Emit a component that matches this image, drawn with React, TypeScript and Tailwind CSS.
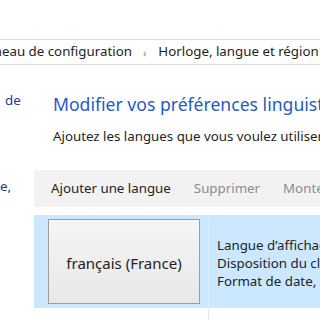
import React from "react";

export default function App() {
  return (
    <div className="w-[320px] h-[320px] overflow-hidden bg-white flex flex-col font-['Segoe_UI','Noto_Sans',sans-serif] text-[13.3px] text-[#1e1e1e]">
      <div className="h-[39px] shrink-0" />
      <div className="h-[26px] shrink-0 border-y border-[#dcdcdc] flex items-center whitespace-nowrap leading-none">
        <span className="ml-[-30px]">Panneau de configuration</span>
        <span className="ml-[11px] mr-[12px] text-[#8a8a8a] text-[11px]">›</span>
        <span>Horloge, langue et région</span>
      </div>
      <div className="flex flex-1 min-h-0">
        <div className="w-[34px] shrink-0 relative text-[#1c3b8f] whitespace-nowrap">
          <div className="pl-[5px] pt-[26px] leading-[18px]">de</div>
          <div className="pt-[68px] leading-[18px]">e,</div>
        </div>
        <div className="flex-1 min-w-0 flex flex-col whitespace-nowrap">
          <div className="pl-[19px] pt-[27px] text-[17.6px] leading-[24px] text-[#1f5bc4]">
            Modifier vos préférences linguistiques
          </div>
          <div className="pl-[19px] pt-[11px] leading-[18px]">
            Ajoutez les langues que vous voulez utiliser dans cette liste.
          </div>
          <div className="mt-[25px] h-[37px] shrink-0 bg-[#f2f2f2] flex items-center pl-[17px] gap-[23px]">
            <span className="text-[#1e1e1e]">Ajouter une langue</span>
            <span className="text-[#8a8a98]">Supprimer</span>
            <span className="text-[#8a8a98]">Monter</span>
          </div>
          <div className="h-[8px] shrink-0" />
          <div className="flex flex-1">
            <div className="w-[174px] shrink-0 flex flex-col">
              <div className="h-[93px] bg-[#cce8ff] pl-[14px] pt-[4px] pr-[8px]">
                <div className="w-[152px] h-[85px] border border-[#9d9d9d] bg-gradient-to-b from-[#f5f5f5] to-[#e8e8e8] flex items-center justify-center pt-[3px] text-[15px] text-[#222]">
                  français (France)
                </div>
              </div>
            </div>
            <div className="flex-1 border-l border-[#dfecfa] flex flex-col">
              <div className="h-[93px] bg-[#cce8ff] pl-[8px] pt-[21px] leading-[18px]">
                <div>Langue d’affichage Windows : activée</div>
                <div>Disposition du clavier : Français</div>
                <div>Format de date, d’heure et de nombre</div>
              </div>
            </div>
          </div>
        </div>
      </div>
    </div>
  );
}
